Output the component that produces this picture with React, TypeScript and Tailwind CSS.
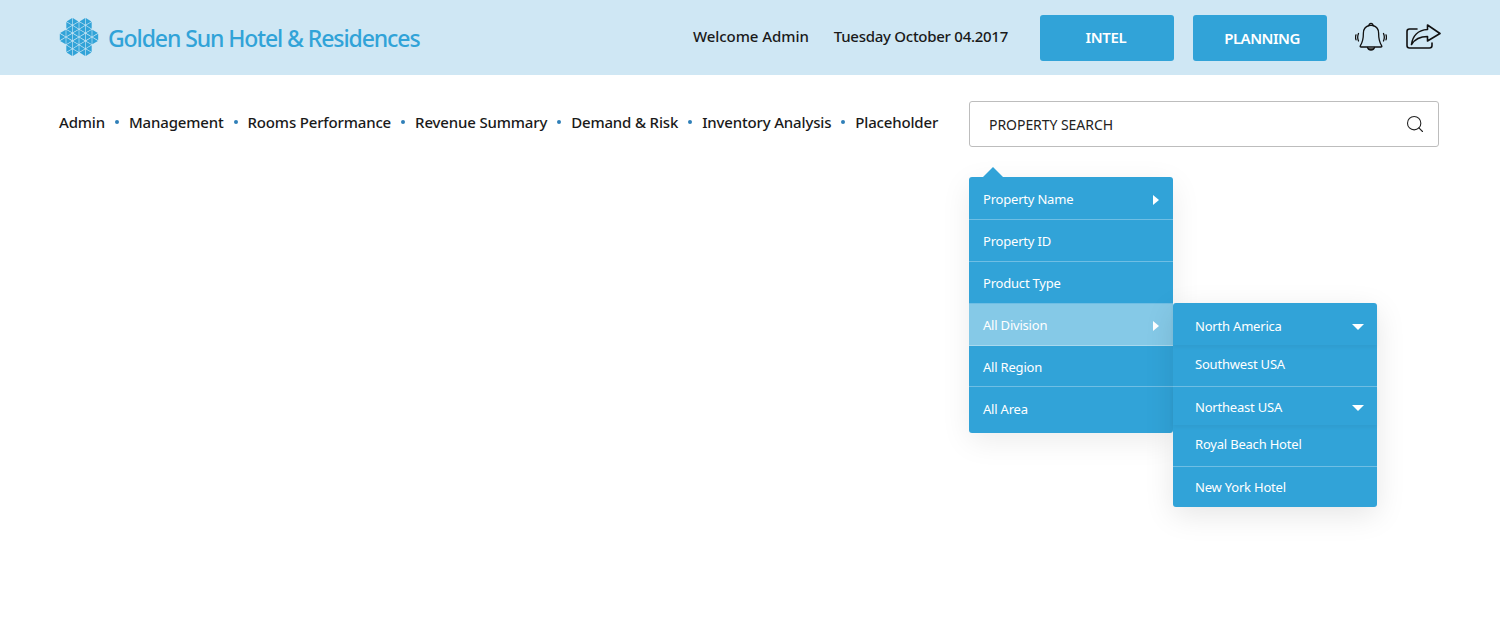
import React from "react";
import { Search } from "lucide-react";

function triangles() {
  const L = 7.8, W = 6.5, out: string[] = [];
  const ring: [number, number][] = [[0, -L], [W, -L / 2], [W, L / 2], [0, L], [-W, L / 2], [-W, -L / 2]];
  const flowers: [number, number][] = [[0, 0], [2 * W, 0], [-2 * W, 0], [W, 1.5 * L], [-W, 1.5 * L], [W, -1.5 * L], [-W, -1.5 * L]];
  for (const [fx, fy] of flowers) {
    for (let i = 0; i < 6; i++) {
      const t: [number, number][] = [[0, 0], ring[i], ring[(i + 1) % 6]];
      const cx = (t[0][0] + t[1][0] + t[2][0]) / 3, cy = (t[0][1] + t[1][1] + t[2][1]) / 3;
      out.push(t.map(([x, y]) => `${(fx + cx + (x - cx) * 0.86 + 20).toFixed(2)},${(fy + cy + (y - cy) * 0.86 + 20).toFixed(2)}`).join(" "));
    }
  }
  return out;
}

function Logo() {
  return (
    <svg width="40" height="40" viewBox="0 0 40 40" className="shrink-0 -mt-[1px]">
      {triangles().map((p, i) => <polygon key={i} points={p} fill="#31a3d8" />)}
    </svg>
  );
}

function Bell() {
  return (
    <svg width="32" height="30" viewBox="0 0 32 30" fill="none" stroke="#111" strokeWidth="1.3" strokeLinecap="round" strokeLinejoin="round">
      <path d="M16 1.5c-1.200 0-2 .8-2 2-3.600 1-5.600 3.800-5.600 7.600 0 5.500-.6 9-3 12.500-.6.9-.2 1.400.8 1.400h19.600c1 0 1.400-.5.8-1.400-2.400-3.500-3-7-3-12.500 0-3.800-2-6.600-5.600-7.600 0-1.200-.8-2-2-2z" />
      <path d="M13.500 3.600c1.600-.4 3.400-.4 5 0" />
      <path d="M12.500 25.500c.6 1.800 1.800 2.500 3.500 2.500s2.900-.7 3.500-2.500" fill="#555" />
      <path d="M3.500 11.500c-1.100 2.500-1.100 5 0 7.500M1 12.800c-.6 1.600-.6 3.400 0 5M28.500 11.500c1.100 2.500 1.100 5 0 7.500M31 12.800c.6 1.600.6 3.400 0 5" />
    </svg>
  );
}

function Share() {
  return (
    <svg width="35" height="25" viewBox="0 0 35 25" fill="none" stroke="#111" strokeWidth="1.6" strokeLinecap="round" strokeLinejoin="round">
      <path d="M11 5H3.500C2 5 1 6 1 7.500v14C1 23 2 24 3.500 24h20c1.500 0 2.500-1 2.500-2.500V19" />
      <path d="M21.500 1l12.500 8.500-12.500 7.500v-4.500c-7 0-12 1.500-16 8 1-8 6-14.500 16-15z" fill="#cfe7f4" />
    </svg>
  );
}

const Caret = () => <span className="w-0 h-0 border-y-[5px] border-y-transparent border-l-[6px] border-l-white" />;
const Down = () => <span className="w-0 h-0 border-x-[6px] border-x-transparent border-t-[6px] border-t-white" />;

const nav = ["Admin", "Management", "Rooms Performance", "Revenue Summary", "Demand & Risk", "Inventory Analysis", "Placeholder"];

const main = [
  { t: "Property Name", c: true, cls: "h-[43px] pt-[3px] border-b" },
  { t: "Property ID", cls: "h-[42px] pt-[3px] border-b" },
  { t: "Product Type", cls: "h-[42px] pt-[3px] border-b" },
  { t: "All Division", c: true, on: true, cls: "h-[42px] pt-[3px] border-b" },
  { t: "All Region", cls: "h-[41px] pt-[3px] border-b" },
  { t: "All Area", cls: "h-[46px] pb-[1px]" },
];

const sub = [
  { t: "North America", d: true, cls: "h-[42px] pt-[5px] shadow-[0_2px_4px_rgba(0,0,0,0.05)]" },
  { t: "Southwest USA", cls: "h-[42px] pb-[2px] border-b" },
  { t: "Northeast USA", d: true, cls: "h-[38px] pt-[3px] shadow-[0_2px_4px_rgba(0,0,0,0.05)]" },
  { t: "Royal Beach Hotel", cls: "h-[42px] pb-[1px] border-b" },
  { t: "New York Hotel", cls: "h-[40px] pt-[1px]" },
];

export default function App() {
  return (
    <div className="w-[1500px] h-[632px] bg-white overflow-hidden text-[#1a1a1a]" style={{ fontFamily: '"Noto Sans", "Open Sans", sans-serif' }}>
      <header className="h-[75px] bg-[#cfe7f4] flex items-center pl-[59px] pr-[59px]">
        <Logo />
        <span className="ml-[9px] mt-[1px] text-[23px] font-medium tracking-[-1.1px] text-[#31a3d8] whitespace-nowrap">Golden Sun Hotel &amp; Residences</span>
        <span className="ml-auto text-[15px] font-medium tracking-[-0.05px] whitespace-nowrap -mt-[3px]">Welcome Admin</span>
        <span className="ml-[25px] text-[15px] font-medium tracking-[-0.27px] whitespace-nowrap -mt-[3px]">Tuesday October 04.2017</span>
        <button className="ml-[32px] w-[134px] h-[46px] rounded-[3px] bg-[#31a3d8] text-white text-[15px] font-semibold tracking-[-0.3px] pr-[2px]">INTEL</button>
        <button className="ml-[19px] w-[134px] h-[46px] rounded-[3px] bg-[#31a3d8] text-white text-[15px] font-semibold tracking-[-0.5px] pl-[4px] pt-[2px]">PLANNING</button>
        <span className="ml-[28px] -mt-[2px] flex"><Bell /></span>
        <span className="ml-[19px] -mt-[2px] flex"><Share /></span>
      </header>

      <div className="flex items-start pl-[59px] pt-[26px] pr-[61px]">
        <nav className="flex items-center h-[42px] text-[15px] font-medium tracking-[-0.165px] whitespace-nowrap">
          {nav.map((n, i) => (
            <React.Fragment key={n}>
              {i > 0 && <span className="w-[4px] h-[4px] rounded-full bg-[#2f7fb8] mx-[10px]" />}
              <span>{n}</span>
            </React.Fragment>
          ))}
        </nav>
        <div className="relative ml-auto w-[470px]">
          <div className="h-[46px] border border-[#bdbdbd] rounded-[3px] flex items-center pl-[19px] pr-[13px] text-[14px] tracking-[-0.05px] text-[#222]">
            <span>PROPERTY SEARCH</span>
            <Search className="ml-auto" size={20} strokeWidth={1.3} />
          </div>

          <div className="absolute left-0 top-[76px] w-[204px] rounded-[3px] bg-[#31a3d8] text-white text-[13px] tracking-[-0.2px] shadow-[0_8px_30px_rgba(0,0,0,0.08)]">
            <span className="absolute left-[14px] -top-[10px] w-0 h-0 border-x-[10px] border-x-transparent border-b-[10px] border-b-[#31a3d8]" />
            {main.map((m) => (
              <div key={m.t} className={`flex items-center pl-[14px] pr-[14px] border-white/30 ${m.cls} ${m.on ? "bg-[#85c9e7]" : ""}`}>
                <span>{m.t}</span>
                {m.c && <span className="ml-auto flex"><Caret /></span>}
              </div>
            ))}
          </div>

          <div className="absolute left-[204px] top-[202px] w-[204px] rounded-[3px] bg-[#31a3d8] text-white text-[13px] tracking-[-0.2px] shadow-[0_8px_30px_rgba(0,0,0,0.1)]">
            {sub.map((s) => (
              <div key={s.t} className={`flex items-center pl-[22px] pr-[13px] border-white/30 ${s.cls}`}>
                <span>{s.t}</span>
                {s.d && <span className="ml-auto flex"><Down /></span>}
              </div>
            ))}
          </div>
        </div>
      </div>
    </div>
  );
}
